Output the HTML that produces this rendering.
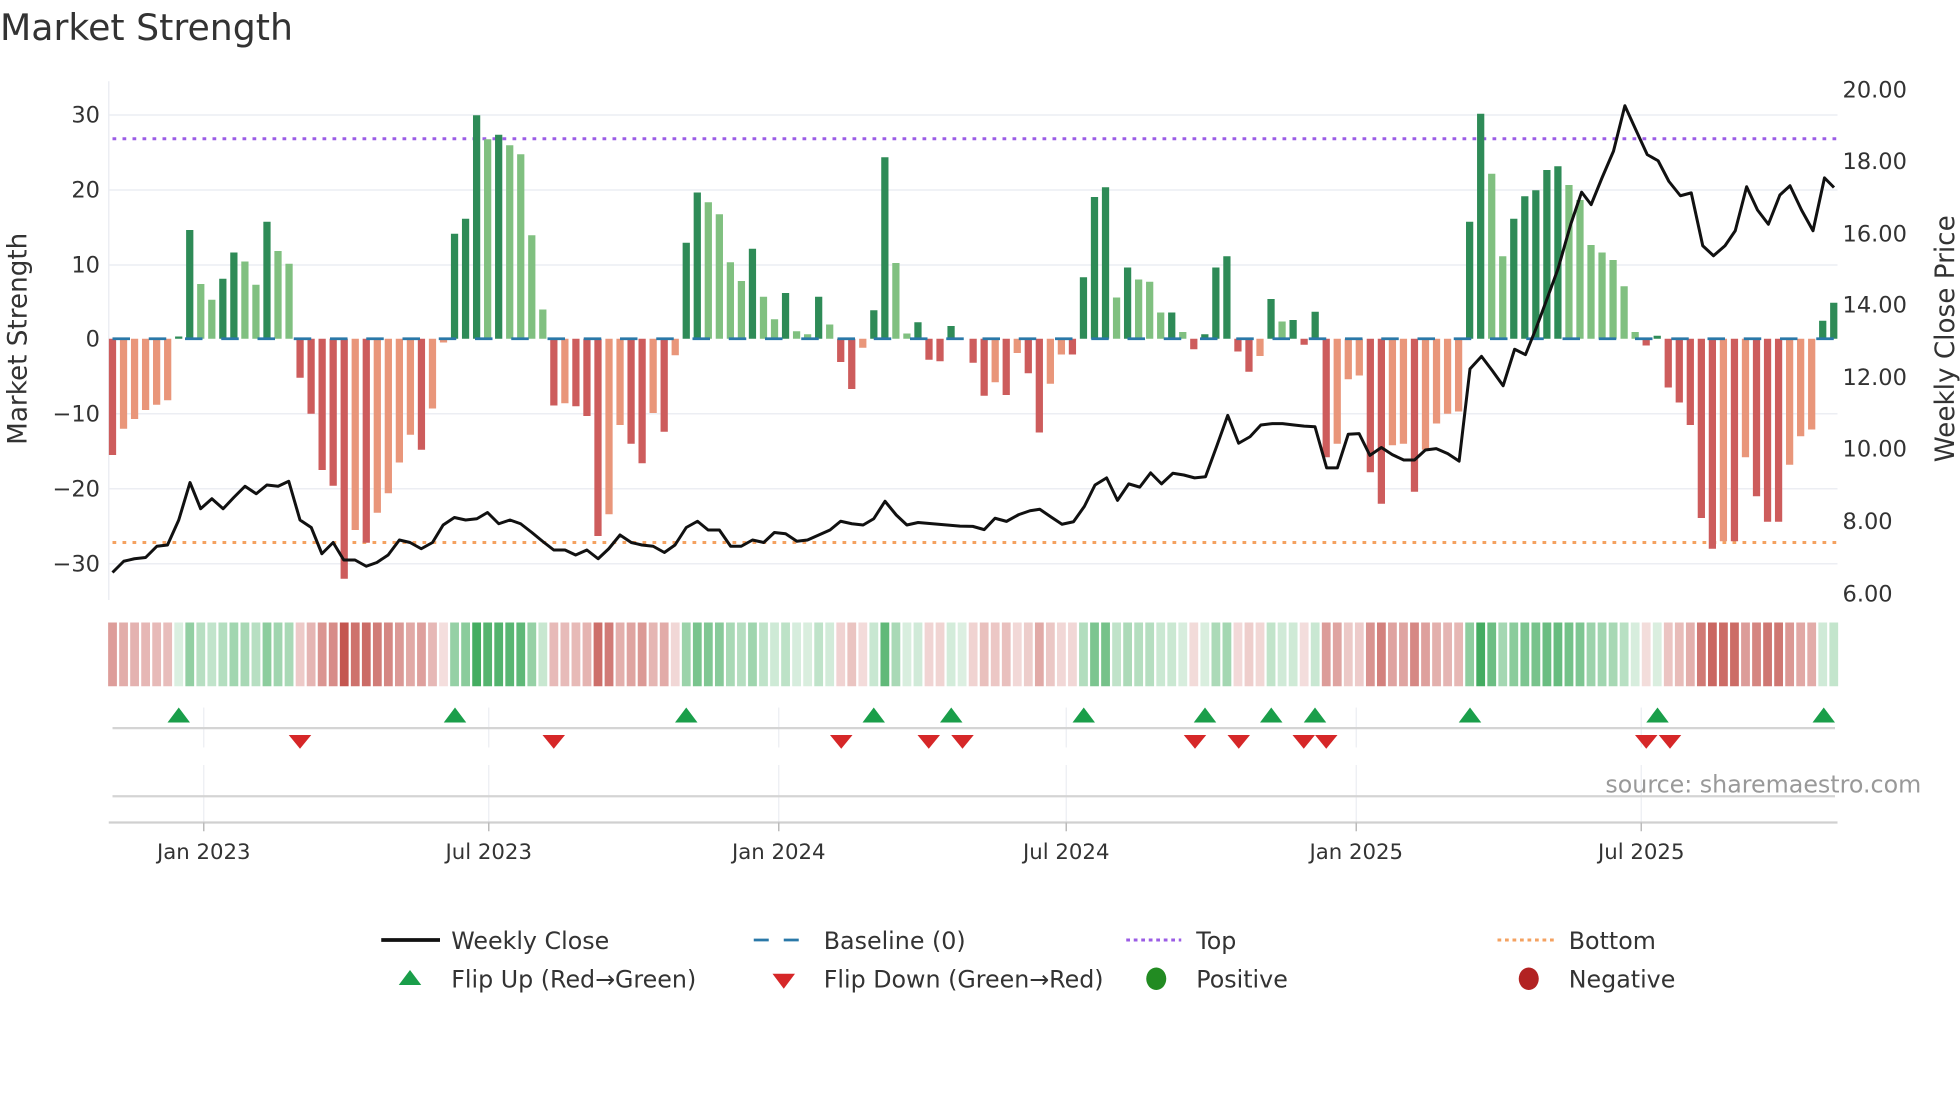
<!DOCTYPE html>
<html><head><meta charset="utf-8"><style>
html,body{margin:0;padding:0;background:#fff;}
svg{display:block;font-family:"DejaVu Sans","Liberation Sans",sans-serif;}
</style></head><body>
<svg id="s" width="1960" height="1102" viewBox="0 0 1568 881.6" xmlns="http://www.w3.org/2000/svg">
<rect width="1568" height="882" fill="#fff"/>
<text x="0" y="32" font-size="29" fill="#333">Market Strength</text>
<g stroke="#eceef3" stroke-width="1.2">
<line x1="87" x2="1470" y1="92" y2="92"/><line x1="87" x2="1470" y1="152" y2="152"/><line x1="87" x2="1470" y1="212" y2="212"/><line x1="87" x2="1470" y1="331" y2="331"/><line x1="87" x2="1470" y1="391" y2="391"/><line x1="87" x2="1470" y1="451" y2="451"/>
<line x1="87" x2="87" y1="65" y2="480"/>
</g>
<g font-size="18" fill="#333" text-anchor="end">
<text x="80" y="98">30</text><text x="80" y="158">20</text><text x="80" y="218">10</text><text x="80" y="277">0</text><text x="80" y="337">−10</text><text x="80" y="397">−20</text><text x="80" y="457">−30</text>
</g>
<g font-size="18" fill="#333">
<text x="1474" y="78">20.00</text><text x="1474" y="135">18.00</text><text x="1474" y="193">16.00</text><text x="1474" y="250">14.00</text><text x="1474" y="308">12.00</text><text x="1474" y="365">10.00</text><text x="1474" y="423">8.00</text><text x="1474" y="481">6.00</text>
</g>
<text transform="translate(21,271) rotate(-90)" font-size="21" fill="#333" text-anchor="middle">Market Strength</text>
<text transform="translate(1563,271) rotate(-90)" font-size="21" fill="#333" text-anchor="middle">Weekly Close Price</text>
<line x1="90" x2="1470" y1="111" y2="111" stroke="#9b5de5" stroke-width="2.4" stroke-dasharray="3 5"/>
<line x1="90" x2="1470" y1="434" y2="434" stroke="#f4a261" stroke-width="2.4" stroke-dasharray="3 5"/>
<g id="bars"></g>
<line x1="90" x2="1470" y1="271" y2="271" stroke="#2a78a8" stroke-width="2.2" stroke-dasharray="14 15"/>
<polyline id="price" fill="none" stroke="#111" stroke-width="2.4" stroke-linejoin="round"/>
<g id="heat"></g>
<g stroke="#eceef3" stroke-width="1"><line x1="163" x2="163" y1="566" y2="598"/><line x1="391" x2="391" y1="566" y2="598"/><line x1="623" x2="623" y1="566" y2="598"/><line x1="853" x2="853" y1="566" y2="598"/><line x1="1085" x2="1085" y1="566" y2="598"/><line x1="1313" x2="1313" y1="566" y2="598"/>
<line x1="163" x2="163" y1="612" y2="658"/><line x1="391" x2="391" y1="612" y2="658"/><line x1="623" x2="623" y1="612" y2="658"/><line x1="853" x2="853" y1="612" y2="658"/><line x1="1085" x2="1085" y1="612" y2="658"/><line x1="1313" x2="1313" y1="612" y2="658"/></g>
<line x1="90" x2="1468" y1="582.5" y2="582.5" stroke="#d4d4d4" stroke-width="1.8"/>
<line x1="90" x2="1468" y1="637" y2="637" stroke="#d4d4d4" stroke-width="1.8"/>
<line x1="87" x2="1470" y1="658" y2="658" stroke="#d0d0d0" stroke-width="1.8"/>
<g stroke="#bbb" stroke-width="1.2"><line x1="163" x2="163" y1="658" y2="665"/><line x1="391" x2="391" y1="658" y2="665"/><line x1="623" x2="623" y1="658" y2="665"/><line x1="853" x2="853" y1="658" y2="665"/><line x1="1085" x2="1085" y1="658" y2="665"/><line x1="1313" x2="1313" y1="658" y2="665"/></g>
<g id="flips"></g>
<text x="1537" y="634" font-size="19" fill="#999" text-anchor="end">source: sharemaestro.com</text>
<g font-size="17" fill="#333" text-anchor="middle">
<text x="163" y="687">Jan 2023</text><text x="391" y="687">Jul 2023</text><text x="623" y="687">Jan 2024</text><text x="853" y="687">Jul 2024</text><text x="1085" y="687">Jan 2025</text><text x="1313" y="687">Jul 2025</text>
</g>
<g font-size="19" fill="#333">
<line x1="305" x2="352" y1="752" y2="752" stroke="#111" stroke-width="3"/>
<text x="361" y="759">Weekly Close</text>
<line x1="603" x2="648" y1="752" y2="752" stroke="#2a78a8" stroke-width="2.2" stroke-dasharray="12 12"/>
<text x="659" y="759">Baseline (0)</text>
<line x1="901" x2="945" y1="752" y2="752" stroke="#9b5de5" stroke-width="2.4" stroke-dasharray="3 3"/>
<text x="957" y="759">Top</text>
<line x1="1198" x2="1243" y1="752" y2="752" stroke="#f4a261" stroke-width="2.4" stroke-dasharray="3 3"/>
<text x="1255" y="759">Bottom</text>
<polygon points="319,788 337,788 328,776" fill="#1a9e4a"/>
<text x="361" y="790">Flip Up (Red→Green)</text>
<polygon points="618,779 636,779 627,791" fill="#d62728"/>
<text x="659" y="790">Flip Down (Green→Red)</text>
<ellipse cx="925" cy="783" rx="8" ry="9" fill="#228b22"/>
<text x="957" y="790">Positive</text>
<ellipse cx="1223" cy="783" rx="8" ry="9" fill="#b22222"/>
<text x="1255" y="790">Negative</text>
</g>
</svg>
<script>
var B=[[-15.5,'d'],[-12,'l'],[-10.7,'l'],[-9.5,'l'],[-8.8,'l'],[-8.2,'l'],[0.3,'d'],[14.5,'d'],[7.3,'l'],[5.2,'l'],[8,'d'],[11.5,'d'],[10.3,'l'],[7.2,'l'],[15.6,'d'],[11.7,'l'],[10,'l'],[-5.2,'d'],[-10,'d'],[-17.5,'d'],[-19.6,'d'],[-32,'d'],[-25.5,'l'],[-27.2,'d'],[-23.2,'l'],[-20.6,'l'],[-16.5,'l'],[-12.8,'l'],[-14.8,'d'],[-9.3,'l'],[-0.5,'l'],[14,'d'],[16,'d'],[29.8,'d'],[26.6,'l'],[27.2,'d'],[25.8,'l'],[24.6,'l'],[13.8,'l'],[3.9,'l'],[-8.9,'d'],[-8.6,'l'],[-9,'d'],[-10.3,'d'],[-26.3,'d'],[-23.4,'l'],[-11.5,'l'],[-14,'d'],[-16.6,'d'],[-9.9,'l'],[-12.4,'d'],[-2.2,'l'],[12.8,'d'],[19.5,'d'],[18.2,'l'],[16.6,'l'],[10.2,'l'],[7.7,'l'],[12,'d'],[5.6,'l'],[2.6,'l'],[6.1,'d'],[1,'l'],[0.6,'l'],[5.6,'d'],[1.9,'l'],[-3.1,'d'],[-6.7,'d'],[-1.2,'l'],[3.8,'d'],[24.2,'d'],[10.1,'l'],[0.7,'l'],[2.2,'d'],[-2.8,'d'],[-3,'d'],[1.7,'d'],[0,'l'],
[-3.2,'d'],[-7.6,'d'],[-5.8,'l'],[-7.5,'d'],[-1.9,'l'],[-4.6,'d'],[-12.5,'d'],[-6,'l'],[-2.1,'l'],[-2.1,'d'],[8.2,'d'],[18.9,'d'],[20.2,'d'],[5.5,'l'],[9.5,'d'],[7.9,'l'],[7.6,'l'],[3.5,'l'],[3.5,'d'],[0.9,'l'],[-1.4,'d'],[0.6,'d'],[9.5,'d'],[11,'d'],[-1.7,'d'],[-4.4,'d'],[-2.3,'l'],[5.3,'d'],[2.3,'l'],[2.5,'d'],[-0.8,'d'],[3.6,'d'],[-15.8,'d'],[-14,'l'],[-5.4,'l'],[-4.9,'l'],[-17.8,'d'],[-22,'d'],[-14.2,'l'],[-14,'l'],[-20.4,'d'],[-14.8,'l'],[-11.3,'l'],[-10,'l'],[-9.7,'l'],[15.6,'d'],[30,'d'],[22,'l'],[11,'l'],[16,'d'],[19,'d'],[19.8,'d'],[22.5,'d'],[23,'d'],[20.5,'l'],[18.5,'l'],[12.5,'l'],[11.5,'l'],[10.5,'l'],[7,'l'],[0.9,'l'],[-0.9,'d'],[0.4,'d'],[-6.5,'d'],[-8.5,'d'],[-11.5,'d'],[-23.9,'d'],[-28,'d'],[-27,'l'],[-27,'d'],[-15.8,'l'],[-21,'d'],[-24.4,'d'],[-24.4,'d'],[-16.8,'l'],[-13,'l'],[-12.1,'l'],[2.4,'d'],[4.8,'d']];
var NS="http://www.w3.org/2000/svg";
function el(p,t,a){var e=document.createElementNS(NS,t);for(var k in a)e.setAttribute(k,a[k]);p.appendChild(e);return e;}
var bars=document.getElementById('bars'),heat=document.getElementById('heat');
var dx=(1467-90)/156;
B.forEach(function(b,i){var v=b[0],cx=90+i*dx,h=Math.abs(v)*6;
 var col=v>=0?(b[1]=='d'?'#2e8b57':'#80c080'):(b[1]=='d'?'#cd5c5c':'#e9967a');
 if(h>0.3)el(bars,'rect',{x:cx-2.9,y:v>=0?271-h:271,width:5.8,height:h,fill:col});
 var t=0.18+0.82*Math.min(1,Math.abs(v)/32);
 var c=v>=0?[58,168,88]:[196,86,80];
 var r=Math.round(255-(255-c[0])*t),g=Math.round(255-(255-c[1])*t),bb=Math.round(255-(255-c[2])*t);
 el(heat,'rect',{x:cx-4.4+0.9,y:498,width:dx-1.8,height:51,fill:'rgb('+r+','+g+','+bb+')'});
});
var P=[[90,458],[99,449],[107.5,447],[116.5,446],[125.5,437],[134,436],[143,416],[152,386],[160.5,407],[169.5,399],[178.5,407],[187,398],[196,389],[205,395],[213.5,388],[222.5,389],[231,385],[240,416],[249,422],[257.5,443],[266.5,434],[275,448],[284,448],[293,453],[301.5,450],[310.5,444],[319.5,432],[328,434],[337,439],[346,434],[354.5,420],[363.5,414],[372.5,416],[381.5,415],[390,410],[399,419],[408,416],[416.5,419],[425.5,426],[434,433],[443,440],[452,440],[460.5,444],[469.5,440],[478.5,447],[487,439],[496,428],[505,434],[513.5,436],[522.5,437],[531.5,442],[540,436],[549,422],[558,417],[566.5,424],[575.5,424],[584.5,437],[593,437],[602,432],[611,434],[619.5,426],[628.5,427],[637.5,433],[646,432],[655,428],[664,424],[672.5,417],[681.5,419],[690.5,420],[699,415],[708,401],[717,412],[725.5,420],[734.5,418],[768,420.9],[778.2,421.1],[787.4,423.7],[796,414.6],[805.2,417.1],[815,411.7],[824,408.6],[831.8,407.4],[841,413.7],[849.6,419.4],[858.8,417.4],[867.5,405.1],[876,388],[885.3,382.3],[894,400.3],[903,387.1],[911.8,389.7],[920.5,378.3],[929.2,387.1],[938.3,378.6],[947,380],[955.7,382.3],[964.4,381.4],[973.5,356.6],[982.2,332.3],[990.9,354.6],[1000,349.4],[1008.7,340],[1017.9,338.9],[1026,338.9],[1035.2,340],[1043.4,340.9],[1052,341.4],[1061.3,374.3],[1069.9,374.3],[1078.6,347.4],[1087.3,346.9],[1095.9,364.3],[1105.1,358],[1113.8,363.7],[1123,368],[1131.6,368],[1140.3,360],[1149,358.9],[1158.2,362.9],[1167.3,368.9],[1176,295.1],[1185.2,285.1],[1193.9,296.6],[1202.5,308.6],[1211.7,279.4],[1220.4,283.7],[1229,262.3],[1237.7,238.9],[1246.4,215.1],[1256.6,179.4],[1265.3,153.7],[1272.9,163.7],[1281.6,142.3],[1290.8,120.9],[1299.9,84.6],[1308.6,103.7],[1317.8,123.7],[1326.5,128.6],[1335.1,145.1],[1344.3,156.6],[1353,154.3],[1362.2,196.6],[1370.8,204.6],[1380,196.6],[1388.2,184.6],[1397.3,149.4],[1406,168],[1414.7,179.4],[1423.9,156],[1432,148.6],[1441.2,168],[1450.4,184.6],[1459.6,142.3],[1467.2,150]];
document.getElementById('price').setAttribute('points',P.map(function(p){return p.join(',')}).join(' '));
var fl=document.getElementById('flips');
[143,364,549,699,761,867,964,1017,1052,1176,1326,1459].forEach(function(x){el(fl,'polygon',{points:(x-9)+',578 '+(x+9)+',578 '+x+',566',fill:'#1a9e4a'});});
[240,443,673,743,770,956,991,1043,1061,1317,1336].forEach(function(x){el(fl,'polygon',{points:(x-9)+',588 '+(x+9)+',588 '+x+',599',fill:'#d62728'});});
</script>
</body></html>
